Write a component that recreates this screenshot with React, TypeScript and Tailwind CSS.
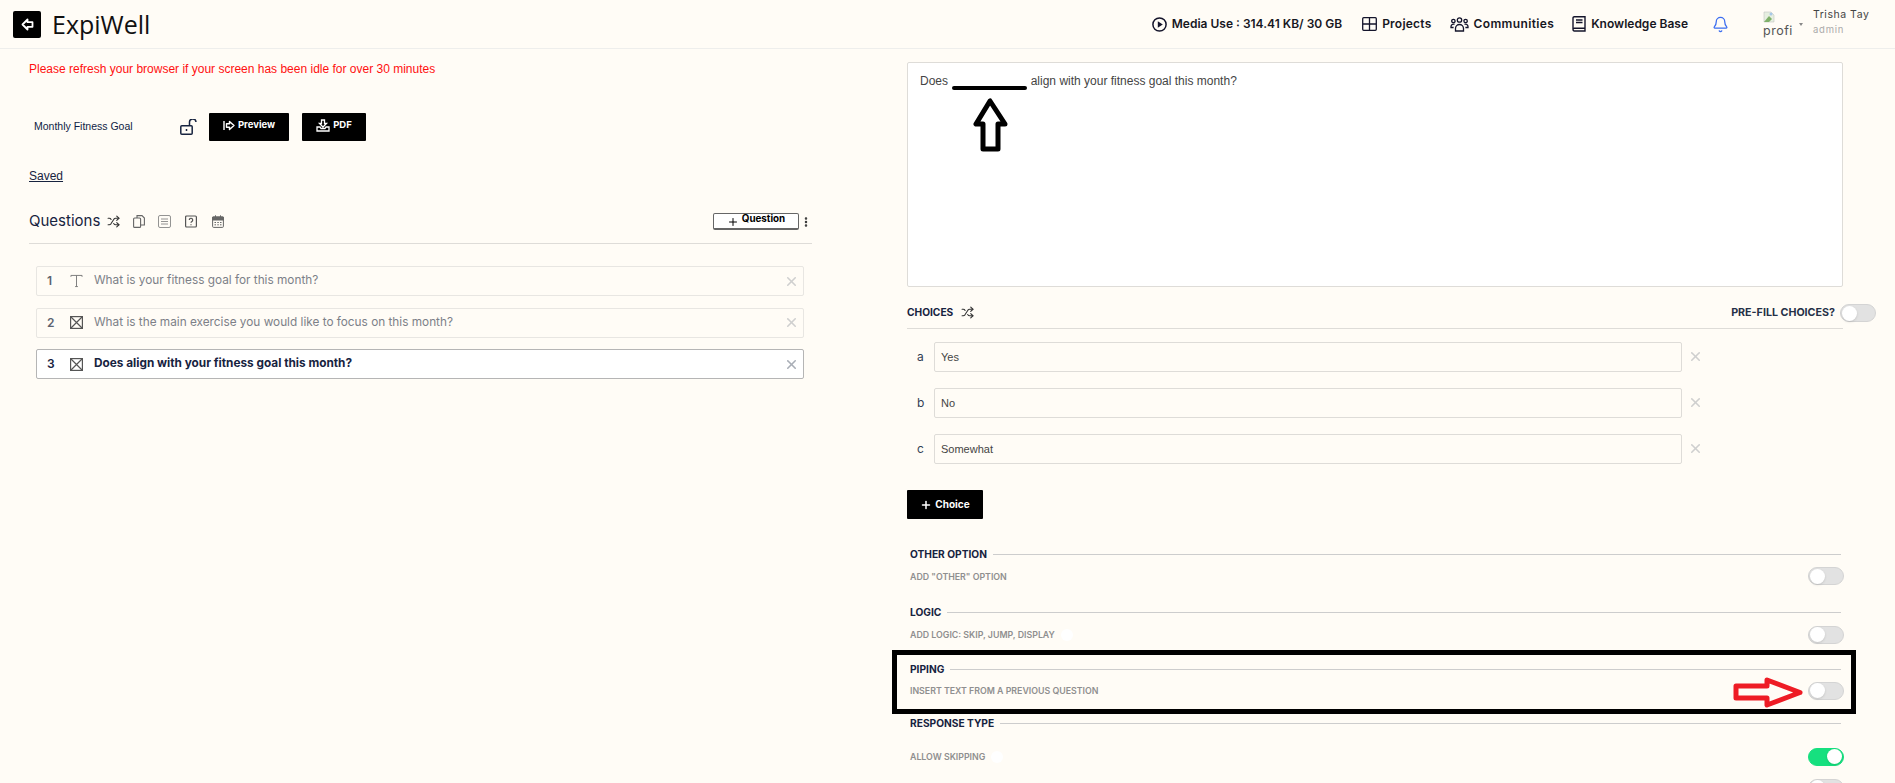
import { Plus, Shuffle, X, EllipsisVertical, Bell } from 'lucide-react'

const sans = 'font-["Inter",sans-serif]'

function Toggle({ on = false }: { on?: boolean }) {
  return (
    <div
      className={`flex h-[18px] w-9 items-center rounded-full border p-px ${
        on ? 'justify-end border-[#16e07f] bg-[#16e07f]' : 'justify-start border-[#d4d4d4] bg-[#e2e2e2]'
      }`}
    >
      <div className="h-[15px] w-[15px] rounded-full bg-white shadow-sm" />
    </div>
  )
}

function BoxIcon() {
  return (
    <svg width="13" height="13" viewBox="0 0 13 13" fill="none" stroke="#555" strokeWidth="1.2">
      <rect x="0.6" y="0.6" width="11.8" height="11.8" />
      <path d="M1 1l11 11M12 1L1 12" />
    </svg>
  )
}

function QuestionRow({ n, text, active, icon }: { n: number; text: string; active?: boolean; icon: 'text' | 'box' }) {
  return (
    <div
      className={`flex h-[30px] items-center rounded-[2px] border pl-[10px] pr-[4px] ${
        active ? 'border-[#b5b5b5] bg-white' : 'border-[#e8e6e2]'
      }`}
    >
      <span className={`w-[21px] text-[12px] font-semibold ${active ? 'text-[#17233f]' : 'text-[#5c6370]'}`}>{n}</span>
      <span className="ml-[2px] flex w-[13px] justify-center">
        {icon === 'text' ? (
          <svg width="14" height="14" viewBox="0 0 14 14" fill="none" stroke="#777" strokeWidth="1">
            <path d="M1 2.5V1h12v1.5M7 1v12M5.5 13h3" />
          </svg>
        ) : (
          <BoxIcon />
        )}
      </span>
      <span className={`ml-[11px] flex-1 text-[11.8px] ${active ? 'font-bold text-[#17233f]' : 'text-[#7c8088]'}`}>{text}</span>
      <X size={15} strokeWidth={2.5} className={active ? 'text-[#a9aeb6]' : 'text-[#cfcfcf]'} />
    </div>
  )
}

function ChoiceRow({ letter, value }: { letter: string; value: string }) {
  return (
    <div className="flex items-center">
      <span className="w-[27px] pl-[10px] text-[12px] text-[#333f55]">{letter}</span>
      <div className="flex h-[30px] w-[748px] items-center rounded-[2px] border border-[#dedcd8] pl-[6px] font-['Liberation_Sans',sans-serif] text-[11px] text-[#444]">
        {value}
      </div>
      <X size={15} strokeWidth={2.5} className="ml-[6px] -translate-y-px text-[#cfcfcf]" />
    </div>
  )
}

function OptionBlock({ title, sub, on, info }: { title: string; sub: string; on?: boolean; info?: boolean }) {
  return (
    <div>
      <div className="flex items-center gap-[6px]">
        <span className="text-[10.2px] font-bold text-[#17233f]">{title}</span>
        <div className="h-px flex-1 bg-[#cdcdcd]" />
      </div>
      <div className="mt-[5px] flex h-[18px] items-center justify-between">
        <div className="flex items-center gap-[6px]">
          <span className="text-[8.8px] font-semibold text-[#8f8f8f]">{sub}</span>
          {info && <span className="h-[12px] w-[12px] rounded-full bg-white" />}
        </div>
        <span className="-mr-[3px]">
          <Toggle on={on} />
        </span>
      </div>
    </div>
  )
}

function NavItem({ icon, label, className = '' }: { icon: React.ReactNode; label: string; className?: string }) {
  return (
    <div className="flex items-center gap-[5px]">
      {icon}
      <span className={`text-[12px] font-semibold text-[#17171f] ${className}`}>{label}</span>
    </div>
  )
}

function PlayIcon() {
  return (
    <svg width="15" height="15" viewBox="0 0 15 15" fill="none" stroke="#14142b" strokeWidth="1.5">
      <circle cx="7.5" cy="7.5" r="6.6" />
      <path d="M5.8 4.2l5 3.3-5 3.3z" fill="#14142b" stroke="none" />
    </svg>
  )
}

function GridIcon() {
  return (
    <svg width="15" height="14" viewBox="0 0 15 14" fill="none" stroke="#14142b" strokeWidth="1.3">
      <rect x="0.7" y="0.7" width="13.6" height="12.6" rx="1" />
      <path d="M7.5 1v12M1 7h13" />
    </svg>
  )
}

function PeopleIcon() {
  return (
    <svg width="19" height="15" viewBox="0 0 19 15" fill="none" stroke="#14142b" strokeWidth="1.3">
      <circle cx="9.5" cy="3" r="2.2" />
      <circle cx="3.4" cy="4" r="1.7" />
      <circle cx="15.6" cy="4" r="1.7" />
      <path d="M5.5 14v-2.5a4 4 0 0 1 8 0V14z" />
      <path d="M3.6 10.5H1v-1a2.5 2.5 0 0 1 3.5-2.2M15.4 10.5H18v-1a2.5 2.5 0 0 0-3.5-2.2" />
    </svg>
  )
}

function BookIcon() {
  return (
    <svg width="14" height="16" viewBox="0 0 14 16" fill="none" stroke="#14142b" strokeWidth="1.4">
      <path d="M1 13V2a1.3 1.3 0 0 1 1.3-1.3H13V15H2.3A1.3 1.3 0 0 1 1 13.6a1.3 1.3 0 0 1 1.3-1.3H13" />
      <path d="M4 4h6.5M4 6.5h6.5" />
    </svg>
  )
}

export default function App() {
  return (
    <div className={`h-[783px] w-[1895px] overflow-hidden bg-[#fffcf6] ${sans}`}>
      <header className="flex h-[49px] items-center justify-between border-b border-[#eeeeec] pl-[13px] pr-[26px]">
        <div className="flex items-center gap-[11px]">
          <div className="flex h-[27px] w-[28px] items-center justify-center rounded-[2px] bg-black">
            <svg width="13" height="13" viewBox="0 0 13 13" fill="none" stroke="white" strokeWidth="1.8" strokeLinejoin="round">
              <path d="M1.5 6.5L6.5 1.5V4.2H11.5V8.8H6.5V11.5z" />
            </svg>
          </div>
          <span className="font-['Open_Sans',sans-serif] text-[25px] leading-none text-[#111]">ExpiWell</span>
        </div>
        <div className="flex items-center">
          <div className="flex items-center gap-[18px]">
            <NavItem icon={<PlayIcon />} label="Media Use : 314.41 KB/ 30 GB" />
            <div className="ml-[2px]">
              <NavItem icon={<GridIcon />} label="Projects" className="tracking-[0.02em]" />
            </div>
            <NavItem icon={<PeopleIcon />} label="Communities" className="tracking-[0.03em]" />
            <NavItem icon={<BookIcon />} label="Knowledge Base" />
          </div>
          <Bell size={17} strokeWidth={1.8} className="ml-[24px] text-[#3b6df0]" />
          <div className="ml-[34px] flex w-[30px] flex-col items-start">
            <svg width="12" height="13" viewBox="0 0 12 13">
              <path d="M1 12V2h7l3 3v7z" fill="#e6efe0" stroke="#c5c5c5" strokeWidth="0.6" />
              <path d="M1 12l5-6 3 3-3 3z" fill="#7fb069" />
              <circle cx="8" cy="4" r="1.5" fill="#a8c8e8" />
            </svg>
            <span className="mt-[2px] text-[12.5px] leading-none tracking-[0.04em] text-[#555]">profi</span>
          </div>
          <span className="ml-[6px] h-0 w-0 border-x-[2.5px] border-t-[3px] border-x-transparent border-t-[#888]" />
          <div className="-mt-[4px] ml-[10px] flex w-[56px] flex-col">
            <span className="whitespace-nowrap text-[10.5px] leading-[14px] tracking-[0.05em] text-[#444]">Trisha Tay</span>
            <span className="mt-[2px] text-[9.5px] leading-[12px] tracking-[0.08em] text-[#aaa]">admin</span>
          </div>
        </div>
      </header>

      <div className="flex">
        <section className="ml-[29px] w-[783px] shrink-0">
          <p className="mt-[13px] font-['Liberation_Sans',sans-serif] text-[12px] leading-[14px] text-[#ff1010]">
            Please refresh your browser if your screen has been idle for over 30 minutes
          </p>
          <div className="mt-[37px] flex items-center">
            <span className="ml-[5px] w-[146px] font-['Liberation_Sans',sans-serif] text-[10.5px] text-[#0f1c45]">Monthly Fitness Goal</span>
            <svg width="18" height="16" viewBox="0 0 18 16" fill="none" stroke="#17233f" strokeWidth="1.5">
              <rect x="0.8" y="6.8" width="11.4" height="8.4" rx="1" />
              <path d="M9.5 6.5V3.5a3 3 0 0 1 6.5-.5" />
              <path d="M6.5 10v2" />
            </svg>
            <button className="ml-[11px] flex h-[28px] w-[80px] items-center justify-center gap-[3px] rounded-[1px] bg-black pb-[3px] text-[9.5px] font-bold text-white">
              <svg width="12" height="11" viewBox="0 0 12 11" fill="none" stroke="white" strokeWidth="1.4" strokeLinejoin="round">
                <path d="M1 1v9M3.5 3.8h3V1.5l4.5 4-4.5 4V7.2h-3z" />
              </svg>
              Preview
            </button>
            <button className="ml-[13px] flex h-[28px] w-[64px] items-center justify-center gap-[3px] rounded-[1px] bg-black pb-[3px] text-[9.5px] font-bold text-white">
              <svg width="14" height="13" viewBox="0 0 14 13" fill="none" stroke="white" strokeWidth="1.3">
                <path d="M5.5 1h3v3.5h2L7 8 3.500 4.500h2zM1 8v4h12V8H10L9 9.500H5L4 8z" />
              </svg>
              PDF
            </button>
          </div>
          <p className="mt-[28px] font-['Liberation_Sans',sans-serif] text-[12px] leading-[14px] text-[#17233f] underline">Saved</p>

          <div className="mt-[25px] flex h-[36px] items-center border-b border-[#dedcd8] pb-[8px]">
            <span className="text-[15px] text-[#17233f]">Questions</span>
            <Shuffle size={13} className="ml-[7px] text-[#333]" />
            <svg className="ml-[13px]" width="12" height="13" viewBox="0 0 12 13" fill="none" stroke="#666" strokeWidth="1.1">
              <rect x="0.6" y="3" width="7" height="9.400" rx="1" />
              <path d="M4 3V0.600h5l2.400 2.400v7H7.600" />
            </svg>
            <svg className="ml-[13px]" width="13" height="13" viewBox="0 0 13 13" fill="none" stroke="#888" strokeWidth="0.9">
              <rect x="0.5" y="0.5" width="12" height="12" rx="1.5" />
              <path d="M3 4h7M3 6.500h7M3 9h7" />
            </svg>
            <svg className="ml-[14px]" width="12" height="13" viewBox="0 0 12 13" fill="none" stroke="#555" strokeWidth="1.200">
              <rect x="0.6" y="1" width="10.800" height="11" rx="1" />
              <path d="M4.300 5a1.700 1.700 0 1 1 2.600 1.400c-.6.400-.9.700-.9 1.400M6 9.200v1" />
            </svg>
            <svg className="ml-[15px]" width="12" height="13" viewBox="0 0 12 13" fill="#666" stroke="#666" strokeWidth="1">
              <rect x="0.6" y="2" width="10.800" height="10.400" rx="1" fill="none" />
              <path d="M0.600 2h10.800v3H0.600zM3.500 0.300v2M8.500 0.300v2" />
              <path d="M2.500 7.500h1.500M5.300 7.500h1.500M8 7.500h1.500M2.500 9.800h1.500M5.300 9.800h1.500M8 9.800h1.500" />
            </svg>
            <button className="ml-auto flex h-[17px] w-[86px] items-start justify-center gap-[3px] rounded-[2px] border border-b-2 border-[#666] bg-white text-[9.800px] font-bold leading-[10px] text-black">
              <Plus size={12} className="mt-[2px]" />
              Question
            </button>
            <EllipsisVertical size={12} strokeWidth={3} className="ml-[1px] text-[#333]" />
          </div>

          <div className="ml-[7px] mr-[8px] mt-[22px] flex flex-col gap-[11.5px]">
            <QuestionRow n={1} icon="text" text="What is your fitness goal for this month?" />
            <QuestionRow n={2} icon="box" text="What is the main exercise you would like to focus on this month?" />
            <QuestionRow n={3} icon="box" active text="Does align with your fitness goal this month?" />
          </div>
        </section>

        <section className="ml-[95px] w-[936px] shrink-0">
          <div className="relative mt-[13px] h-[225px] rounded-[2px] border border-[#dedcd8] bg-white px-[12px] pt-[11px] font-['Liberation_Sans',sans-serif] text-[12px] leading-[14px] text-[#444]">
            Does <span className="inline-block w-[76px]" /> align with your fitness goal this month?
            <div className="absolute left-[44px] top-[23px] h-[4px] w-[75px] rounded-full bg-black" />
            <svg className="absolute left-[65px] top-[34px]" width="35" height="55" viewBox="0 0 35 55" fill="none" stroke="black" strokeWidth="5" strokeLinejoin="round">
              <path d="M17 4L3 27h7v25h15V27h7z" />
            </svg>
          </div>

          <div className="mt-[16px] flex h-[26px] items-center justify-between border-b border-[#dedcd8] pb-[5px]">
            <div className="flex items-center gap-[8px]">
              <span className="text-[10.2px] font-bold text-[#17233f]">CHOICES</span>
              <Shuffle size={13} className="text-[#333]" />
            </div>
            <div className="flex items-center gap-[5px]">
              <span className="text-[10.700px] font-bold text-[#253047]">PRE-FILL CHOICES?</span>
              <span className="-mr-[33px]">
                <Toggle />
              </span>
            </div>
          </div>

          <div className="mt-[13px] flex flex-col gap-[16px]">
            <ChoiceRow letter="a" value="Yes" />
            <ChoiceRow letter="b" value="No" />
            <ChoiceRow letter="c" value="Somewhat" />
          </div>

          <button className="mt-[26px] flex h-[29px] w-[76px] items-center justify-center gap-[3px] rounded-[1px] bg-black text-[10px] font-bold text-white">
            <Plus size={12} strokeWidth={3} />
            Choice
          </button>

          <div className="ml-[3px] mt-[28px] flex flex-col gap-[20px] pr-[2px]">
            <OptionBlock title="OTHER OPTION" sub={'ADD "OTHER" OPTION'} />
            <OptionBlock title="LOGIC" sub="ADD LOGIC: SKIP, JUMP, DISPLAY" info />
          </div>

          <div className="relative -ml-[15px] -mr-[13px] mt-[6px] h-[64px] border-[5px] border-black pl-[13px] pr-[10px] pt-[7px]">
            <OptionBlock title="PIPING" sub="INSERT TEXT FROM A PREVIOUS QUESTION" />
            <svg className="absolute left-[836px] top-[22px]" width="71" height="31" viewBox="0 0 71 31" fill="none" stroke="#ee1c25" strokeWidth="5" strokeLinejoin="round">
              <path d="M3 9h31V3l33 12.500L34 28v-7H3z" />
            </svg>
          </div>

          <div className="ml-[3px] mt-[2px] pr-[2px]">
            <div className="flex items-center gap-[6px]">
              <span className="text-[10.2px] font-bold text-[#17233f]">RESPONSE TYPE</span>
              <div className="h-px flex-1 bg-[#cdcdcd]" />
            </div>
            <div className="mt-[17px] flex h-[18px] items-center justify-between">
              <div className="flex items-center gap-[6px]">
                <span className="text-[8.8px] font-semibold text-[#8f8f8f]">ALLOW SKIPPING</span>
                <span className="h-[12px] w-[12px] rounded-full bg-white" />
              </div>
              <span className="-mr-[3px]">
                <Toggle on />
              </span>
            </div>
            <div className="mt-[13px] flex justify-end">
              <span className="-mr-[3px]">
                <Toggle />
              </span>
            </div>
          </div>
        </section>
      </div>
    </div>
  )
}
